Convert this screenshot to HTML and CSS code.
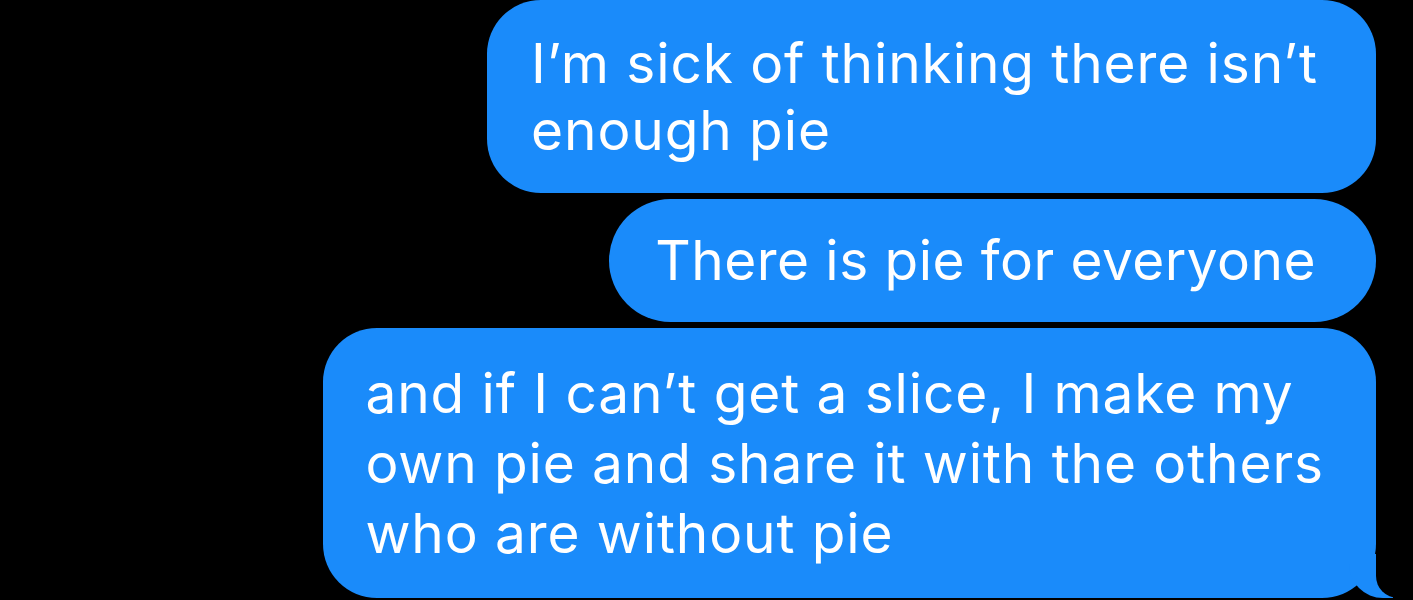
FILE: index.html
```
<!DOCTYPE html>
<html lang="en">
<head>
    <meta charset="UTF-8">
    <meta name="viewport" content="width=device-width, initial-scale=1.0">
    <title>Messages</title>
    <link rel="stylesheet" href="styles.css">
</head>
<body>
<main class="thread">
    <div class="bubble">I’m sick of thinking there isn’t<br>enough pie</div>
    <div class="bubble single">There is pie for everyone</div>
    <div class="bubble last">and if I can’t get a slice, I make my<br>own pie and share it with the others<br>who are without pie</div>
</main>
</body>
</html>
```

FILE: styles.css
```
body {
    margin: 0;
    background-color: #000;
    font-family: Inter, "Liberation Sans", sans-serif;
}

.thread {
    display: flex;
    flex-direction: column;
    align-items: flex-end;
    gap: 6px;
    padding: 0 37px 0 0;
}

.bubble {
    position: relative;
    background-color: #1a8bfa;
    color: #fff;
    font-size: 55px;
    letter-spacing: 0.9px;
    line-height: 67px;
    padding: 30px 58px 29px 44px;
    border-radius: 54px;
    white-space: nowrap;
}

.bubble.single {
    letter-spacing: 0.45px;
    padding: 28px 60px 28px 46px;
    border-radius: 62px;
}

.bubble.last {
    line-height: 70px;
    padding: 30px 52px 30px 42px;
}

.bubble.last::before {
    content: "";
    position: absolute;
    bottom: 0;
    right: -17px;
    width: 44px;
    height: 44px;
    background-color: #1a8bfa;
    border-bottom-left-radius: 34px;
}

.bubble.last::after {
    content: "";
    position: absolute;
    bottom: 0;
    right: -24px;
    width: 24px;
    height: 44px;
    background-color: #000;
    border-bottom-left-radius: 22px;
}
```
